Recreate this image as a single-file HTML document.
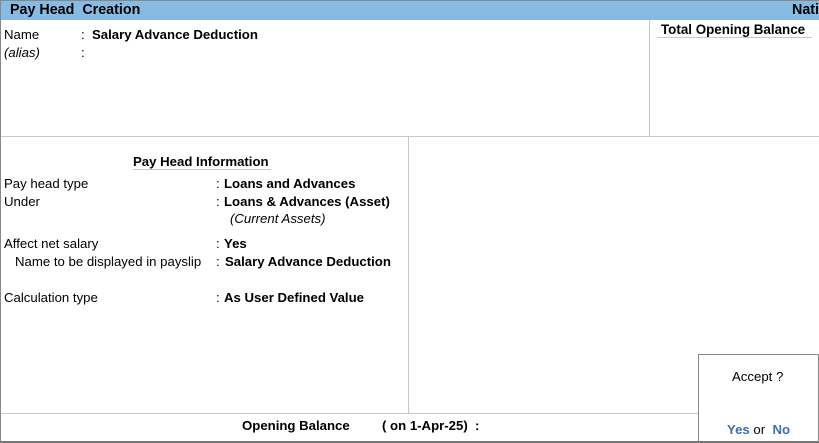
<!DOCTYPE html>
<html><head><meta charset="utf-8"><style>
*{margin:0;padding:0;box-sizing:border-box}
body{width:819px;height:443px;position:relative;background:#fff;font-family:"Liberation Sans",Arial,sans-serif;font-size:13.2px;color:#000;overflow:hidden}
.a{position:absolute;white-space:nowrap;line-height:15px}
.b{font-weight:bold}
.i{font-style:italic}
.l{position:absolute;background:#c8c8c8}
</style></head><body>
<div style="position:absolute;left:0;top:0;width:819px;height:443px;border-left:1px solid #888;border-top:1px solid #888;border-bottom:2px solid #777"></div>
<div style="position:absolute;left:1px;top:1px;width:818px;height:19px;background:#86bbe4"></div>
<div class="a b" style="left:10px;top:2px;font-size:14.3px;line-height:16px">Pay Head&nbsp; Creation</div>
<div class="a b" style="left:792px;top:2px;font-size:14.3px;line-height:16px">Nati</div>

<div class="a" style="left:4px;top:27px">Name</div>
<div class="a" style="left:81px;top:27px">:</div>
<div class="a b" style="left:92px;top:27px">Salary Advance Deduction</div>
<div class="a i" style="left:4px;top:45px">(alias)</div>
<div class="a" style="left:81px;top:45px">:</div>

<div class="l" style="left:649px;top:20px;width:1px;height:116px"></div>
<div class="a b" style="left:661px;top:22px;font-size:13.4px">Total Opening Balance</div>
<div class="l" style="left:657px;top:37px;width:155px;height:1px"></div>
<div class="l" style="left:1px;top:136px;width:818px;height:1px"></div>

<div class="l" style="left:408px;top:137px;width:1px;height:276px"></div>
<div class="a b" style="left:133px;top:154px">Pay Head Information</div>
<div class="l" style="left:133px;top:169px;width:138px;height:1px"></div>

<div class="a" style="left:4px;top:176px">Pay head type</div>
<div class="a" style="left:216px;top:176px">:</div>
<div class="a b" style="left:224px;top:176px">Loans and Advances</div>
<div class="a" style="left:4px;top:194px">Under</div>
<div class="a" style="left:216px;top:194px">:</div>
<div class="a b" style="left:224px;top:194px">Loans &amp; Advances (Asset)</div>
<div class="a i" style="left:230px;top:211px">(Current Assets)</div>
<div class="a" style="left:4px;top:236px">Affect net salary</div>
<div class="a" style="left:216px;top:236px">:</div>
<div class="a b" style="left:224px;top:236px">Yes</div>
<div class="a" style="left:15px;top:254px">Name to be displayed in payslip</div>
<div class="a" style="left:216px;top:254px">:</div>
<div class="a b" style="left:225px;top:254px">Salary Advance Deduction</div>
<div class="a" style="left:4px;top:290px">Calculation type</div>
<div class="a" style="left:216px;top:290px">:</div>
<div class="a b" style="left:224px;top:290px">As User Defined Value</div>

<div class="l" style="left:1px;top:413px;width:818px;height:1px"></div>
<div class="a b" style="left:242px;top:418px">Opening Balance</div>
<div class="a b" style="left:382px;top:418px">( on 1-Apr-25)&nbsp; :</div>

<div style="position:absolute;left:698px;top:354px;width:121px;height:89px;background:#fff;border:1px solid #888;border-bottom:2px solid #777"></div>
<div class="a" style="left:732px;top:369px">Accept ?</div>
<div class="a" style="left:727px;top:422px"><span class="b" style="color:#3a6fb8">Yes</span> or <span class="b" style="color:#3a6fb8">&nbsp;No</span></div>
</body></html>
